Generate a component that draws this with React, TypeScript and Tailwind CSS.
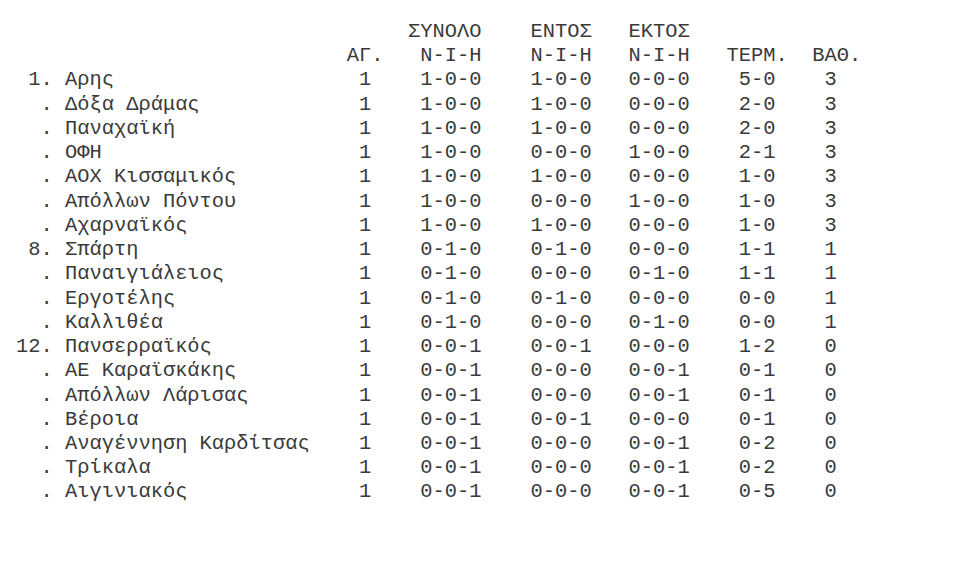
import React from "react";

type Row = {
  rank: string;
  name: string;
  g: string;
  tot: string;
  home: string;
  away: string;
  goals: string;
  pts: string;
};

const rows: Row[] = [
  { rank: " 1.", name: "Αρης", g: "1", tot: "1-0-0", home: "1-0-0", away: "0-0-0", goals: "5-0", pts: "3" },
  { rank: "  .", name: "Δόξα Δράμας", g: "1", tot: "1-0-0", home: "1-0-0", away: "0-0-0", goals: "2-0", pts: "3" },
  { rank: "  .", name: "Παναχαϊκή", g: "1", tot: "1-0-0", home: "1-0-0", away: "0-0-0", goals: "2-0", pts: "3" },
  { rank: "  .", name: "ΟΦΗ", g: "1", tot: "1-0-0", home: "0-0-0", away: "1-0-0", goals: "2-1", pts: "3" },
  { rank: "  .", name: "ΑΟΧ Κισσαμικός", g: "1", tot: "1-0-0", home: "1-0-0", away: "0-0-0", goals: "1-0", pts: "3" },
  { rank: "  .", name: "Απόλλων Πόντου", g: "1", tot: "1-0-0", home: "0-0-0", away: "1-0-0", goals: "1-0", pts: "3" },
  { rank: "  .", name: "Αχαρναϊκός", g: "1", tot: "1-0-0", home: "1-0-0", away: "0-0-0", goals: "1-0", pts: "3" },
  { rank: " 8.", name: "Σπάρτη", g: "1", tot: "0-1-0", home: "0-1-0", away: "0-0-0", goals: "1-1", pts: "1" },
  { rank: "  .", name: "Παναιγιάλειος", g: "1", tot: "0-1-0", home: "0-0-0", away: "0-1-0", goals: "1-1", pts: "1" },
  { rank: "  .", name: "Εργοτέλης", g: "1", tot: "0-1-0", home: "0-1-0", away: "0-0-0", goals: "0-0", pts: "1" },
  { rank: "  .", name: "Καλλιθέα", g: "1", tot: "0-1-0", home: "0-0-0", away: "0-1-0", goals: "0-0", pts: "1" },
  { rank: "12.", name: "Πανσερραϊκός", g: "1", tot: "0-0-1", home: "0-0-1", away: "0-0-0", goals: "1-2", pts: "0" },
  { rank: "  .", name: "ΑΕ Καραϊσκάκης", g: "1", tot: "0-0-1", home: "0-0-0", away: "0-0-1", goals: "0-1", pts: "0" },
  { rank: "  .", name: "Απόλλων Λάρισας", g: "1", tot: "0-0-1", home: "0-0-0", away: "0-0-1", goals: "0-1", pts: "0" },
  { rank: "  .", name: "Βέροια", g: "1", tot: "0-0-1", home: "0-0-1", away: "0-0-0", goals: "0-1", pts: "0" },
  { rank: "  .", name: "Αναγέννηση Καρδίτσας", g: "1", tot: "0-0-1", home: "0-0-0", away: "0-0-1", goals: "0-2", pts: "0" },
  { rank: "  .", name: "Τρίκαλα", g: "1", tot: "0-0-1", home: "0-0-0", away: "0-0-1", goals: "0-2", pts: "0" },
  { rank: "  .", name: "Αιγινιακός", g: "1", tot: "0-0-1", home: "0-0-0", away: "0-0-1", goals: "0-5", pts: "0" },
];

// column grid, 1 char = 12.25px
const grid =
  "grid grid-cols-[49px_281.75px_61.25px_122.5px_98px_98px_85.75px_1fr] whitespace-pre";

function Line({ cells }: { cells: string[] }) {
  return (
    <div className={grid}>
      {cells.map((c, i) => (
        <span key={i}>{c}</span>
      ))}
    </div>
  );
}

export default function App() {
  return (
    <div
      className="min-h-[573px] w-[960px] bg-white pl-[16px] pt-[20px] text-[20.4px] leading-[24.24px] text-[#3a3a3a]"
      style={{ fontFamily: '"Liberation Mono", "Courier New", monospace' }}
    >
      <div className="flex flex-col">
        <Line cells={["", "", "", "ΣΥΝΟΛΟ", "ΕΝΤΟΣ", "ΕΚΤΟΣ", "", ""]} />
        <Line cells={["", "", "ΑΓ.", " Ν-Ι-Η", "Ν-Ι-Η", "Ν-Ι-Η", "ΤΕΡΜ.", "ΒΑΘ."]} />
        {rows.map((r, i) => (
          <Line
            key={i}
            cells={[r.rank, r.name, " " + r.g, " " + r.tot, r.home, r.away, " " + r.goals, " " + r.pts]}
          />
        ))}
      </div>
    </div>
  );
}
